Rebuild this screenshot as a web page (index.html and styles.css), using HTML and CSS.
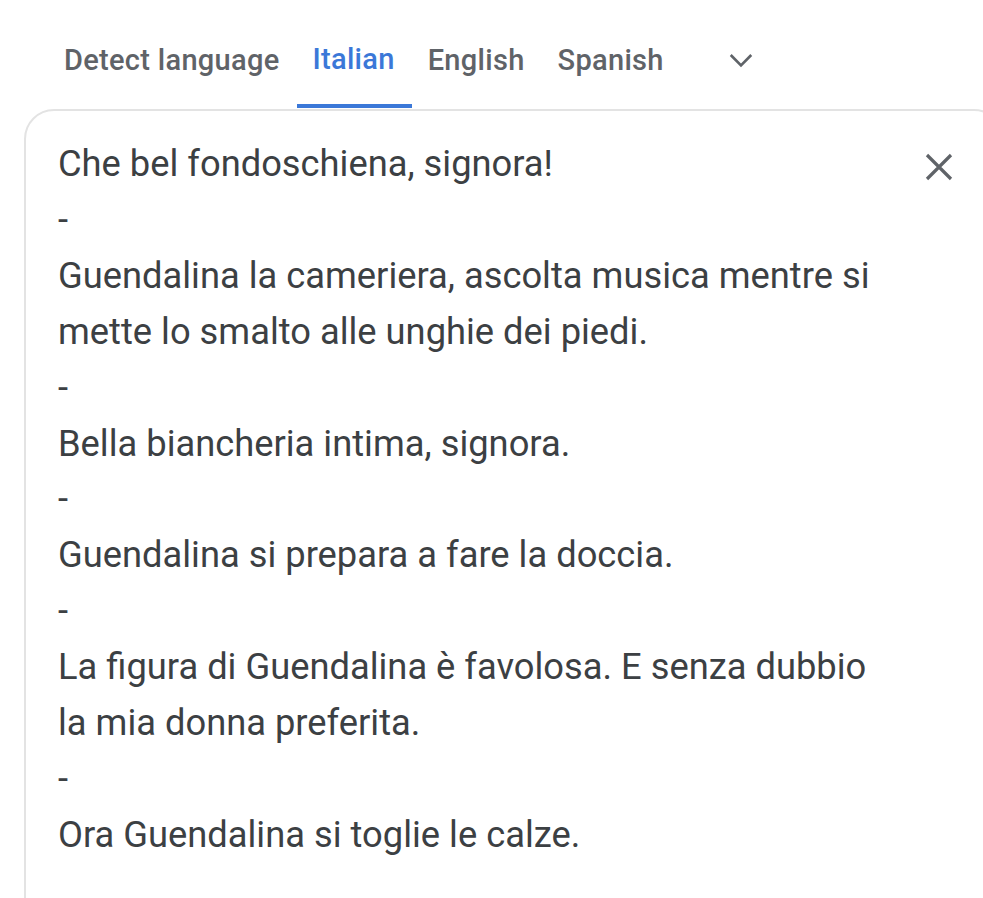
FILE: index.html
```html
<!DOCTYPE html>
<html lang="it">
<head>
<meta charset="utf-8">
<title>Translate</title>
<link rel="stylesheet" href="styles.css">
</head>
<body>
<div class="page">
  <nav class="tabs">
    <div class="tab">Detect language</div>
    <div class="tab active">Italian</div>
    <div class="tab">English</div>
    <div class="tab">Spanish</div>
    <div class="more">
      <svg width="32" height="32" viewBox="0 0 24 24"><path d="M4.3 8.3 12 16l7.7-7.7" fill="none" stroke="#5f6368" stroke-width="2"/></svg>
    </div>
  </nav>
  <section class="card">
    <div class="source">Che bel fondoschiena, signora!<br>-<br>Guendalina la cameriera, ascolta musica mentre si<br>mette lo smalto alle unghie dei piedi.<br>-<br>Bella biancheria intima, signora.<br>-<br>Guendalina si prepara a fare la doccia.<br>-<br>La figura di Guendalina è favolosa. E senza dubbio<br>la mia donna preferita.<br>-<br>Ora Guendalina si toglie le calze.</div>
    <button class="clear" aria-label="Clear">
      <svg width="28" height="28" viewBox="0 0 28 28"><path d="M2 2l24 24M26 2 2 26" fill="none" stroke="#5f6368" stroke-width="3.2"/></svg>
    </button>
  </section>
</div>
</body>
</html>
```

FILE: styles.css
```css
html, body {
  margin: 0;
  padding: 0;
  background: #fff;
}
.page {
  width: 983px;
  height: 898px;
  overflow: hidden;
  font-family: Roboto, "Open Sans", sans-serif;
}
.tabs {
  display: flex;
  align-items: stretch;
  height: 109px;
  padding-left: 48px;
  box-sizing: border-box;
}
.tab {
  display: flex;
  align-items: center;
  padding: 14px 17px 0 16px;
  font-size: 29px;
  font-weight: 500;
  color: #5f6368;
  letter-spacing: 0.3px;
  border-bottom: 4px solid transparent;
  box-sizing: border-box;
}
.tab.active {
  color: #3b78d8;
  border-bottom-color: #3b78d8;
  margin-bottom: 1px;
}
.more {
  display: flex;
  align-items: center;
  padding: 16px 0 0 44px;
  margin-bottom: 5px;
}
.card {
  margin-left: 24px;
  width: 980px;
  height: 820px;
  border: 2px solid #e3e3e3;
  border-radius: 30px;
  box-sizing: border-box;
  display: flex;
  justify-content: space-between;
  padding: 25px 0 0 32px;
}
.source {
  font-size: 36.3px;
  line-height: 55.9px;
  color: #3c4043;
}
.clear {
  align-self: flex-start;
  margin: 17px 49px 0 0;
  padding: 0;
  border: 0;
  background: none;
  width: 28px;
  height: 28px;
}
```
